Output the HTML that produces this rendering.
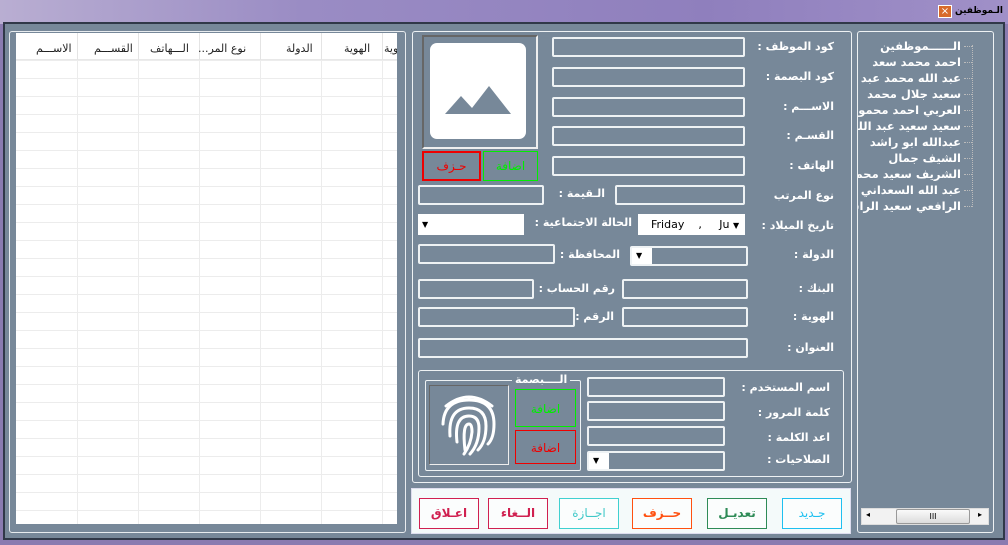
<!DOCTYPE html><html><head><meta charset="utf-8"><style>
*{margin:0;padding:0;box-sizing:border-box}
body{width:1008px;height:545px;overflow:hidden;position:relative;background:#8a7bb0;font-family:"DejaVu Sans",sans-serif}
.a{position:absolute}
.tb{position:absolute;border:2px solid #eef2f4;border-radius:2px;background:#778899}
.lb{position:absolute;color:#fff;font-weight:bold;font-size:11px;direction:rtl;white-space:nowrap}
.btn{position:absolute;font-size:12px;text-align:center;line-height:28px;background:#fbfdfd;font-weight:bold}
.tr{position:absolute;right:32px;color:#fff;font-weight:bold;font-size:11.5px;direction:rtl;white-space:nowrap}
.dh{position:absolute;left:106px;width:8px;border-top:1px dotted #bbb}
</style></head><body>
<div class="a" style="left:0;top:0;width:1008px;height:24px;background:linear-gradient(90deg,#b9aed2,#9a8cc4 30%,#8f7fbd 70%,#a090c8)"></div>
<div class="a" style="left:3px;top:22px;width:1002px;height:518px;background:#778899;border:2px solid #303848"></div>
<div class="a" style="left:938px;top:5px;width:14px;height:13px;background:#d86a2a;border:1px solid #fff;color:#fff;font-size:10px;line-height:11px;text-align:center">×</div>
<div class="a" style="left:955px;top:6px;font-size:9px;font-weight:bold;color:#000;direction:rtl;white-space:nowrap">الـموظفين</div>
<!-- left grid -->
<div class="a" style="left:9px;top:31px;width:397px;height:502px;border:1px solid #e8ecef;border-radius:3px"></div>
<div class="a" style="left:16px;top:33px;width:381px;height:491px;background:#fff;overflow:hidden;
background-image:repeating-linear-gradient(90deg,transparent 0 60px,#ececec 60px 61px),repeating-linear-gradient(180deg,transparent 0 17px,#ececec 17px 18px);background-position:1px 0,0 10px">
<div class="a" style="left:0;top:0;width:381px;height:27px;background:#fff;border-bottom:1px solid #e8e8e8"></div>
<div class="a" style="left:0;top:0;width:381px;height:27px;background:repeating-linear-gradient(90deg,transparent 0 60px,#e4e4e4 60px 61px);background-position:1px 0"></div>
<div class="a" style="top:9px;left:0;width:381px;font-size:11px;color:#222">
<span class="a" style="left:20px">الاســـم</span><span class="a" style="left:78px">القســـم</span><span class="a" style="left:134px">الـــهاتف</span><span class="a" style="left:182px">...نوع المر</span><span class="a" style="left:270px">الدولة</span><span class="a" style="left:328px">الهوية</span><span class="a" style="left:368px">وية</span></div>
</div>
<!-- middle panel -->
<div class="a" style="left:412px;top:31px;width:440px;height:452px;border:1px solid #eef2f4;border-radius:3px"></div>
<div class="a" style="left:422px;top:35px;width:116px;height:114px;border:2px solid #eee;border-top-color:#666;border-left-color:#666"></div>
<div class="a" style="left:430px;top:43px;width:96px;height:96px;background:#fff;border-radius:7px"></div>
<svg class="a" style="left:445px;top:86px" width="66" height="29"><polygon points="0,28 16,10 27,22 44,0 66,28" fill="#778899"/></svg>
<div class="a" style="left:422px;top:151px;width:59px;height:30px;border:2px solid #e00;color:#e00;font-size:12px;text-align:center;line-height:26px">حـزف</div>
<div class="a" style="left:483px;top:151px;width:55px;height:30px;border:1px solid #0e0;color:#0e0;font-size:12px;text-align:center;line-height:28px">اضافة</div>
<div class="tb" style="left:552px;top:37px;width:193px;height:20px"></div><div class="lb" style="right:174px;top:40px">كود الموظف :</div>
<div class="tb" style="left:552px;top:67px;width:193px;height:20px"></div><div class="lb" style="right:174px;top:70px">كود البصمة :</div>
<div class="tb" style="left:552px;top:97px;width:193px;height:20px"></div><div class="lb" style="right:174px;top:100px">الاســـم :</div>
<div class="tb" style="left:552px;top:126px;width:193px;height:20px"></div><div class="lb" style="right:174px;top:129px">القسـم :</div>
<div class="tb" style="left:552px;top:156px;width:193px;height:20px"></div><div class="lb" style="right:174px;top:159px">الهاتف :</div>
<div class="tb" style="left:615px;top:185px;width:130px;height:20px"></div><div class="lb" style="right:174px;top:189px">نوع المرتب</div>
<div class="tb" style="left:418px;top:185px;width:126px;height:20px"></div><div class="lb" style="right:403px;top:187px">الـقيمة :</div>
<div class="a" style="left:638px;top:214px;width:107px;height:21px;background:#fff;font-size:11px;line-height:21px;padding-left:13px">Friday &nbsp;&nbsp; , &nbsp;&nbsp;&nbsp; Ju <span style="font-size:8px">▼</span></div>
<div class="lb" style="right:174px;top:219px">تاريخ الميلاد :</div>
<div class="a" style="left:418px;top:214px;width:106px;height:21px;background:#fff;font-size:8px;line-height:21px;padding-left:4px">▼</div>
<div class="lb" style="right:376px;top:216px">الحالة الاجتماعية :</div>
<div class="tb" style="left:418px;top:244px;width:137px;height:20px"></div><div class="lb" style="right:388px;top:248px">المحافظة :</div>
<div class="tb" style="left:630px;top:246px;width:118px;height:20px"></div><div class="a" style="left:632px;top:248px;width:20px;height:16px;background:#fff;font-size:8px;line-height:16px;padding-left:4px">▼</div>
<div class="lb" style="right:174px;top:248px">الدولة :</div>
<div class="tb" style="left:418px;top:279px;width:116px;height:20px"></div><div class="lb" style="right:393px;top:282px">رقم الحساب :</div>
<div class="tb" style="left:622px;top:279px;width:126px;height:20px"></div><div class="lb" style="right:174px;top:282px">البنك :</div>
<div class="tb" style="left:418px;top:307px;width:157px;height:20px"></div><div class="lb" style="right:394px;top:310px">الرقم :</div>
<div class="tb" style="left:622px;top:307px;width:126px;height:20px"></div><div class="lb" style="right:174px;top:310px">الهوية :</div>
<div class="tb" style="left:418px;top:338px;width:330px;height:20px"></div><div class="lb" style="right:174px;top:341px">العنوان :</div>
<div class="a" style="left:418px;top:370px;width:426px;height:107px;border:1px solid #eef2f4;border-radius:3px"></div>
<div class="a" style="left:425px;top:380px;width:156px;height:91px;border:1px solid #eef2f4;border-radius:2px"></div>
<div class="a" style="left:512px;top:373px;background:#778899;padding:0 3px;color:#fff;font-weight:bold;font-size:11px">الــــبصمة</div>
<div class="a" style="left:429px;top:385px;width:80px;height:80px;border:1px solid #eee;border-top-color:#666;border-left-color:#666"></div>
<svg class="a" style="left:440px;top:392px" width="58" height="66" fill="none" stroke="#fff" stroke-width="3" stroke-linecap="round">
<path d="M6 14 Q29 -4 52 14"/><path d="M3 32 Q4 8 29 8 Q54 8 54 32 Q54 46 48 52"/><path d="M10 44 Q8 16 29 16 Q46 16 46 34 Q46 50 38 58"/><path d="M17 50 Q14 24 29 24 Q39 24 39 36 Q39 52 30 62"/><path d="M25 58 Q22 32 29 32 Q32 32 32 40 Q31 52 24 62"/></svg>
<div class="a" style="left:515px;top:389px;width:61px;height:38px;border:1px solid #0e0;color:#0e0;font-size:12px;text-align:center;line-height:38px">اضافة</div>
<div class="a" style="left:515px;top:430px;width:61px;height:34px;border:1px solid #e00;color:#e00;font-size:12px;text-align:center;line-height:34px">اضافة</div>
<div class="tb" style="left:587px;top:377px;width:138px;height:20px"></div><div class="lb" style="right:178px;top:381px">اسم المستخدم :</div>
<div class="tb" style="left:587px;top:401px;width:138px;height:20px"></div><div class="lb" style="right:178px;top:406px">كلمة المرور :</div>
<div class="tb" style="left:587px;top:426px;width:138px;height:20px"></div><div class="lb" style="right:178px;top:431px">اعد الكلمة :</div>
<div class="tb" style="left:587px;top:451px;width:138px;height:20px"></div><div class="a" style="left:589px;top:453px;width:20px;height:16px;background:#fff;font-size:8px;line-height:16px;padding-left:4px">▼</div>
<div class="lb" style="right:178px;top:453px">الصلاحيات :</div>
<div class="a" style="left:411px;top:488px;width:440px;height:46px;background:#f4fafa;border:1px solid #dde"></div>
<div class="btn" style="left:419px;top:498px;width:60px;height:31px;border:1px solid #d02050;color:#d02050">اعـلاق</div>
<div class="btn" style="left:488px;top:498px;width:60px;height:31px;border:1px solid #d02050;color:#d02050">الــغاء</div>
<div class="btn" style="left:559px;top:498px;width:60px;height:31px;border:1px solid #40d0d0;color:#40c8c8;font-weight:normal">اجــازة</div>
<div class="btn" style="left:632px;top:498px;width:60px;height:31px;border:1px solid #ff5010;color:#ff5010">حــزف</div>
<div class="btn" style="left:707px;top:498px;width:60px;height:31px;border:1px solid #2e8b57;color:#2e8b57">تعديـل</div>
<div class="btn" style="left:782px;top:498px;width:60px;height:31px;border:1px solid #1ec0f0;color:#1ec0f0;font-weight:normal">جـديد</div>
<!-- right panel -->
<div class="a" style="left:857px;top:31px;width:137px;height:502px;border:1px solid #eef2f4;border-radius:3px;overflow:hidden">
<div class="a" style="left:114px;top:13px;width:1px;height:162px;border-left:1px dotted #bbb"></div>
<div class="dh" style="top:14px"></div><div class="dh" style="top:30px"></div><div class="dh" style="top:46px"></div><div class="dh" style="top:62px"></div><div class="dh" style="top:78px"></div><div class="dh" style="top:94px"></div><div class="dh" style="top:110px"></div><div class="dh" style="top:126px"></div><div class="dh" style="top:142px"></div><div class="dh" style="top:158px"></div><div class="dh" style="top:174px"></div>
<div class="tr" style="top:7px">الــــــموظفين</div><div class="tr" style="top:23px">احمد محمد سعد</div><div class="tr" style="top:39px">عبد الله محمد عبد</div><div class="tr" style="top:55px">سعيد جلال محمد</div><div class="tr" style="top:71px">العربي احمد محمود</div><div class="tr" style="top:87px">سعيد سعيد عبد الله</div><div class="tr" style="top:103px">عبدالله ابو راشد</div><div class="tr" style="top:119px">الشيف جمال</div><div class="tr" style="top:135px">الشريف سعيد محمد</div><div class="tr" style="top:151px">عبد الله السعداني</div><div class="tr" style="top:167px">الرافعي سعيد الراشد</div>
<div class="a" style="left:3px;top:476px;width:128px;height:17px;background:#f2f2f2;border:1px solid #ddd"></div>
<div class="a" style="left:38px;top:477px;width:74px;height:15px;background:linear-gradient(#fafafa,#dcdcdc);border:1px solid #999;border-radius:2px;font-size:8px;text-align:center;line-height:13px">III</div>
<div class="a" style="left:8px;top:478px;font-size:8px">◂</div><div class="a" style="left:120px;top:478px;font-size:8px">▸</div>
</div>
</body></html>
